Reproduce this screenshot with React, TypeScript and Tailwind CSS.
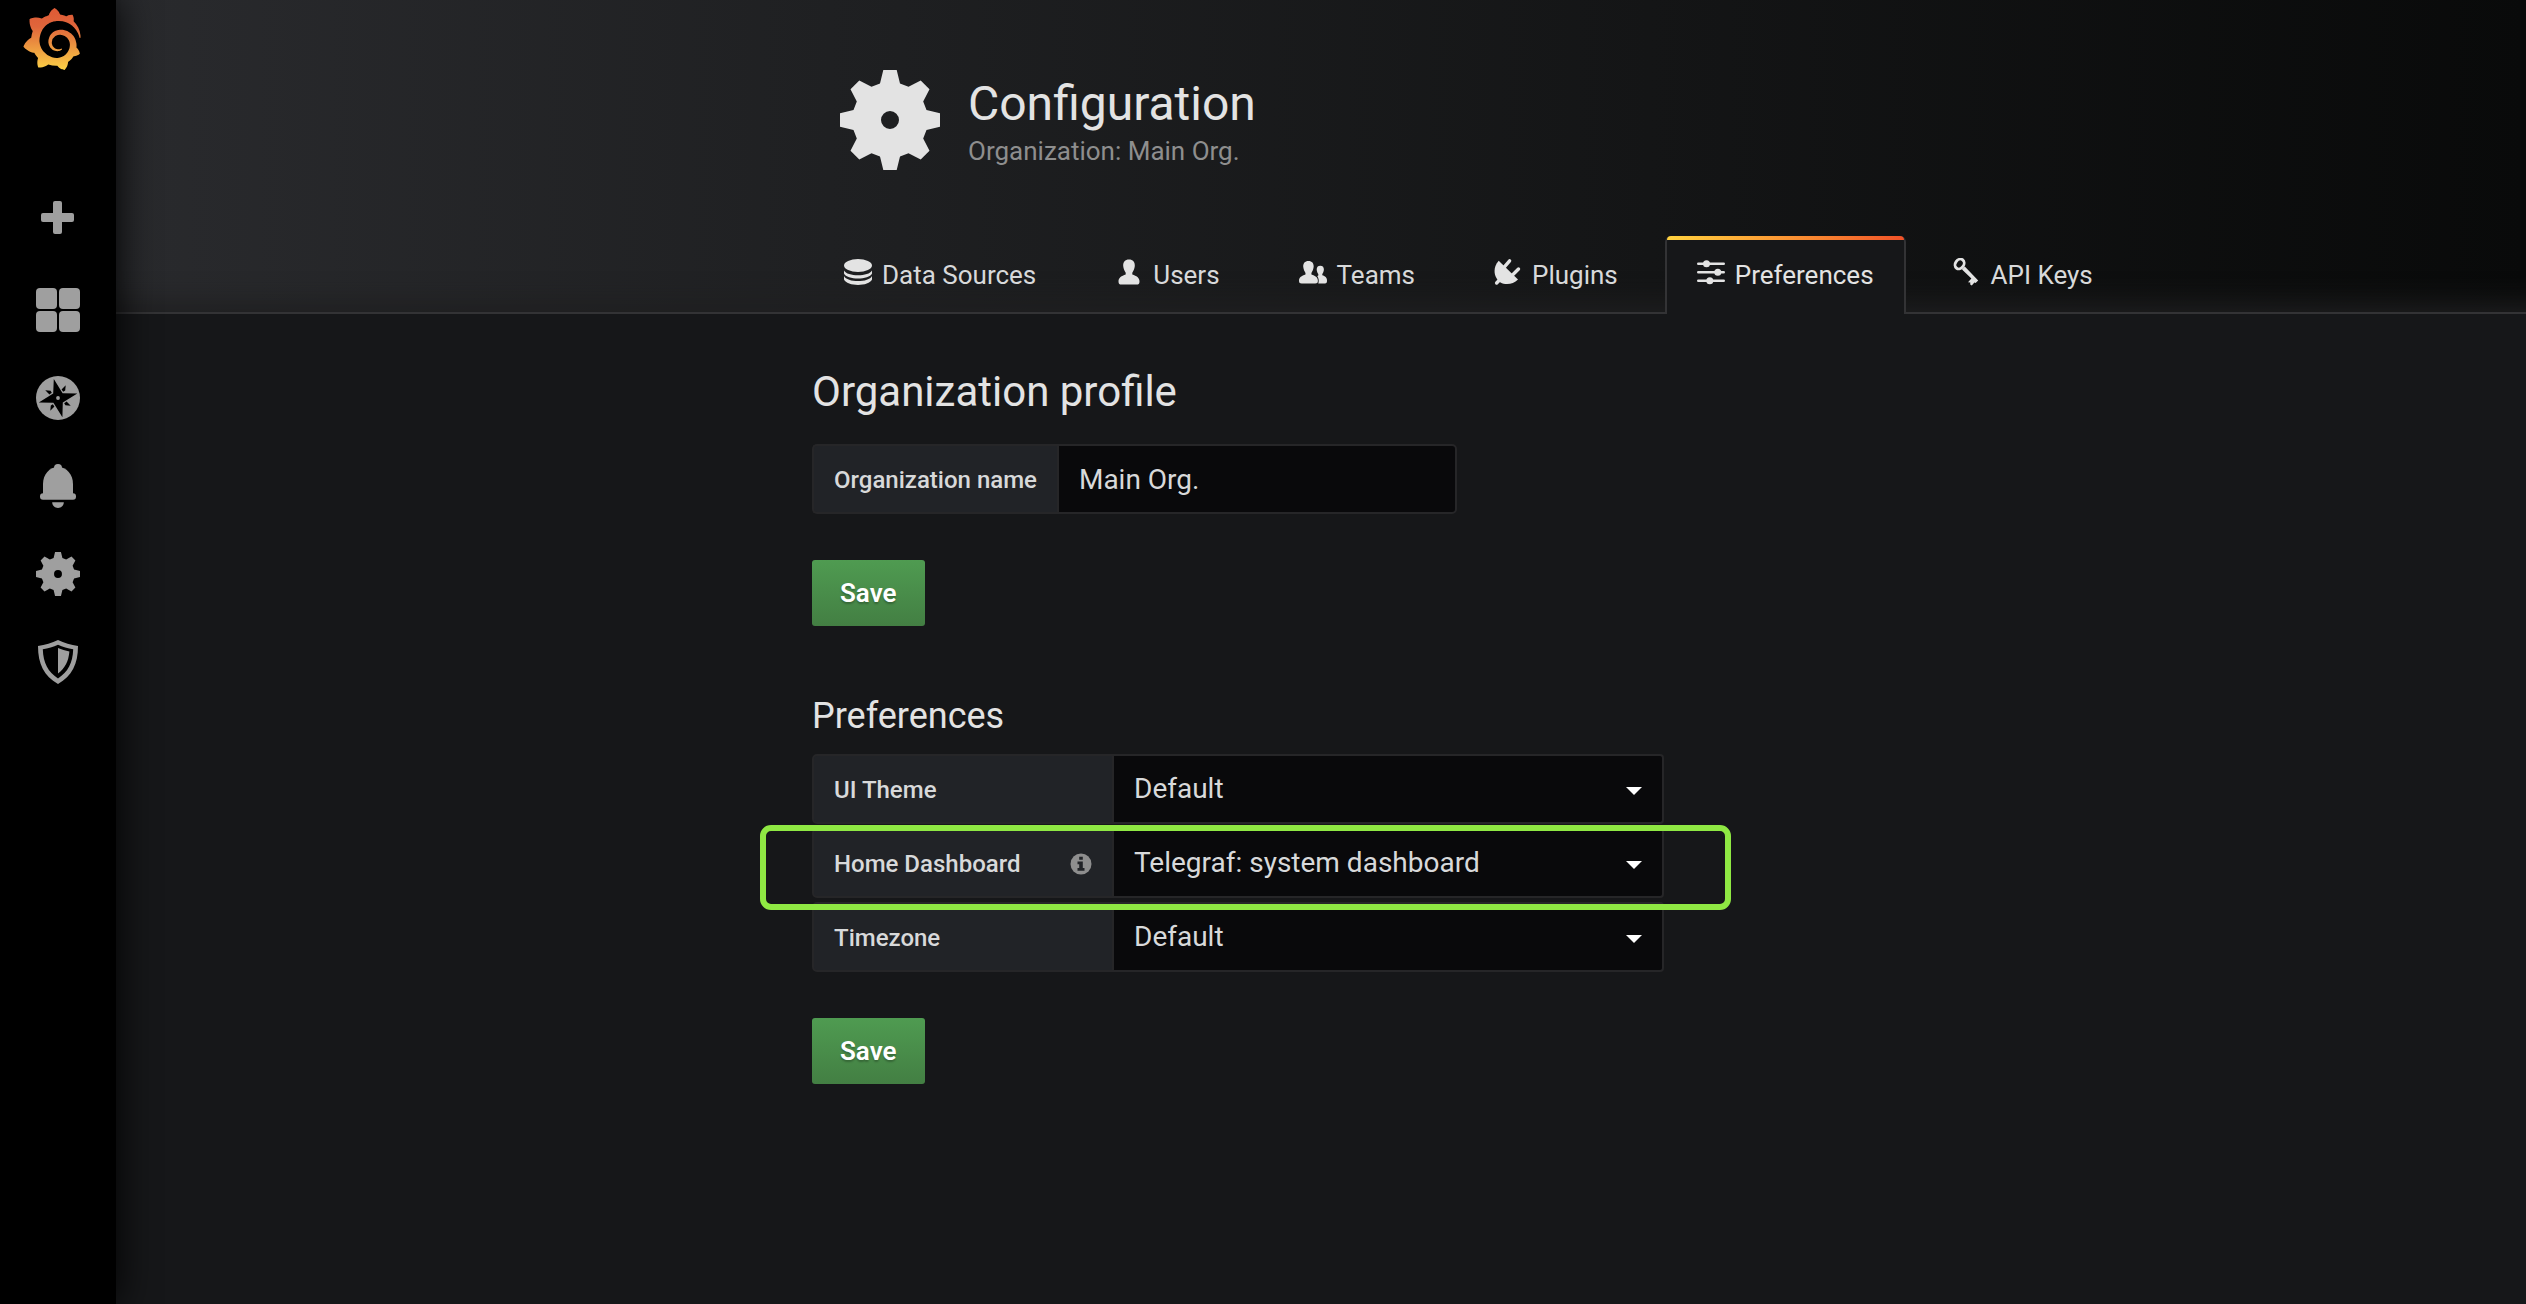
import { useId } from "react";
import type { ReactNode } from "react";
import { SiGrafana } from "react-icons/si";

function GearIcon({ className }: { className: string }) {
  return (
    <svg viewBox="0 0 100 100" className={className} fill="currentColor" aria-hidden="true">
      <path
        fillRule="evenodd"
        d="M43.3 0H56.7L60 13.5L68.5 16.8L80.7 10.5L89.5 19.3L83.2 31.5L86.5 40L100 43.3V56.7L86.5 60L83.2 68.5L89.5 80.7L80.7 89.5L68.5 83.2L60 86.5L56.7 100H43.3L40 86.5L31.5 83.2L19.3 89.5L10.5 80.7L16.8 68.5L13.5 60L0 56.7V43.3L13.5 40L16.8 31.5L10.5 19.3L19.3 10.5L31.5 16.8L40 13.5ZM50 41A9 9 0 1 0 50 59A9 9 0 1 0 50 41Z"
      />
    </svg>
  );
}

function SideIcon({ children }: { children: ReactNode }) {
  return (
    <svg viewBox="0 0 44 44" className="size-11" fill="currentColor" aria-hidden="true">
      {children}
    </svg>
  );
}

function TabIcon({ children }: { children: ReactNode }) {
  return (
    <svg viewBox="0 0 28 28" className="mb-1.5 size-7 shrink-0" fill="currentColor" aria-hidden="true">
      {children}
    </svg>
  );
}

const quarterTurns = [0, 90, 180, 270];

const sideLinks: { label: string; icon: ReactNode }[] = [
  {
    label: "Create",
    icon: (
      <SideIcon>
        <rect x="5" y="13" width="33" height="9" rx="2" />
        <rect x="17" y="1" width="9" height="33" rx="2" />
      </SideIcon>
    ),
  },
  {
    label: "Dashboards",
    icon: (
      <SideIcon>
        <rect x="0" y="0" width="21" height="21" rx="4" />
        <rect x="23" y="0" width="21" height="21" rx="4" />
        <rect x="0" y="23" width="21" height="21" rx="4" />
        <rect x="23" y="23" width="21" height="21" rx="4" />
      </SideIcon>
    ),
  },
  {
    label: "Explore",
    icon: (
      <SideIcon>
        <circle cx="22" cy="22" r="22" />
        <path
          fill="black"
          d="M17.8 3L26.6 17.2L41.3 17.4L26.8 26.6L26.4 41.2L17.4 26.8L2.8 26.4L17.2 17.4Z"
        />
        {quarterTurns.map((turn) => (
          <path
            key={turn}
            fill="black"
            transform={`rotate(${turn} 22 22)`}
            d="M29.7 9.3L25.6 13.4L27.2 15.8L29.2 14.6Z"
          />
        ))}
        <circle cx="22" cy="22" r="1.9" />
      </SideIcon>
    ),
  },
  {
    label: "Alerting",
    icon: (
      <SideIcon>
        <circle cx="22" cy="4" r="4" />
        <path d="M7 30V20C7 10.5 13.5 3 22 3S37 10.5 37 20V30Z" />
        <rect x="4" y="29.3" width="36" height="6.4" rx="3" />
        <path d="M16.2 38.3H27.8C27.8 41.5 25.3 44 22 44S16.2 41.5 16.2 38.3Z" />
      </SideIcon>
    ),
  },
  { label: "Configuration", icon: <GearIcon className="size-11" /> },
  {
    label: "Server Admin",
    icon: (
      <SideIcon>
        <path
          fillRule="evenodd"
          d="M22 0C16 3 9 5 2 6C2 24 8 36 22 44C36 36 42 24 42 6C35 5 28 3 22 0ZM22 4.7C17.5 7 12 8.5 6.8 9.3C7.3 23 12 32 22 38.4C32 32 36.7 23 37.2 9.3C32 8.5 26.5 7 22 4.7Z"
        />
        <path d="M22 8C25.5 9.6 29.5 10.8 33.4 11.4C32.5 21.5 29 28 22 33.4Z" />
      </SideIcon>
    ),
  },
];

const userPath =
  "M10.5 0C14.5 0 16.5 2.5 16.3 6.5C16 9.5 15 11.5 13.8 13.2V15C18 16.5 21 18 21 22C21 24.5 20 25 18 25H3C1 25 0 24.5 0 22C0 18 3 16.5 7.2 15V13.2C6 11.5 5 9.5 4.7 6.5C4.5 2.5 6.5 0 10.5 0Z";

const tabs: { label: string; active?: boolean; icon: ReactNode }[] = [
  {
    label: "Data Sources",
    icon: (
      <TabIcon>
        <ellipse cx="14" cy="7.5" rx="14" ry="6.5" />
        <path d="M0 12.5C3 18.8 25 18.8 28 12.5V15.5C25 22.2 3 22.2 0 15.5Z" />
        <path d="M0 18C3 24.8 25 24.8 28 18V21.5C25 28.7 3 28.7 0 21.5Z" />
      </TabIcon>
    ),
  },
  {
    label: "Users",
    icon: (
      <TabIcon>
        <path transform="translate(3.5 1.5)" d={userPath} />
      </TabIcon>
    ),
  },
  {
    label: "Teams",
    icon: (
      <TabIcon>
        <path transform="translate(0 3) scale(0.9)" d={userPath} />
        <path d="M21.3 7.7C23.8 7.7 25 9.3 24.9 11.8C24.7 13.7 24 15 23.3 16V17.3C26 18.2 28 19.3 28 22.5C28 24.8 27.5 25.5 26 25.5H19.2C20 24.5 20 20.5 18.6 18.8C18.2 18.3 18.6 17.9 19.3 17.5V16C18.5 15 17.9 13.7 17.7 11.8C17.6 9.3 18.8 7.7 21.3 7.7Z" />
      </TabIcon>
    ),
  },
  {
    label: "Plugins",
    icon: (
      <TabIcon>
        <path d="M4.7 2.7L24 21.5C19 27 11 27 6.5 24.5C0 20 -2 10 4.7 2.7Z" />
        <path
          d="M10 9.3L15.6 2.9M18.5 17L24.5 11M2.6 25L6 21.5"
          stroke="currentColor"
          strokeWidth="3.4"
          strokeLinecap="round"
        />
      </TabIcon>
    ),
  },
  {
    label: "Preferences",
    active: true,
    icon: (
      <TabIcon>
        <path
          d="M1.3 5.7H26.7M1.3 14.2H26.7M1.3 22.7H26.7"
          stroke="currentColor"
          strokeWidth="2.6"
          strokeLinecap="round"
        />
        <circle cx="9.5" cy="5.7" r="3.5" />
        <circle cx="20.8" cy="14.2" r="3.5" />
        <circle cx="12.8" cy="22.7" r="3.5" />
      </TabIcon>
    ),
  },
  {
    label: "API Keys",
    icon: (
      <TabIcon>
        <ellipse
          cx="6.6"
          cy="6"
          rx="4.2"
          ry="5.2"
          transform="rotate(35 6.6 6)"
          fill="none"
          stroke="currentColor"
          strokeWidth="2.8"
        />
        <path d="M9 11.4L11.8 8.6L25.2 22.6L22.6 25L21.4 24.6L18.8 27.6L17.2 26.6L17.3 24.6L15 24.2L18.4 20.4Z" />
      </TabIcon>
    ),
  },
];

const preferences = [
  { label: "UI Theme", value: "Default", info: false, highlight: false },
  { label: "Home Dashboard", value: "Telegraf: system dashboard", info: true, highlight: true },
  { label: "Timezone", value: "Default", info: false, highlight: false },
];

function InfoIcon() {
  return (
    <svg viewBox="0 0 22 22" className="size-[22px]" role="img" aria-label="Info">
      <circle cx="11" cy="11" r="10.5" fill="#8e8e8e" />
      <path
        fill="#212327"
        d="M9.2 3.8H12.8V6.8H9.2ZM7.5 8.5H12.8V15H14.5V17.8H7.5V15H9.2V11.2H7.5Z"
      />
    </svg>
  );
}

function SaveButton() {
  return (
    <button
      type="submit"
      className="mt-[46px] flex h-[66px] items-center justify-center rounded-[3px] bg-linear-to-b from-[#4f9b51] to-[#437f43] px-7 text-[26px] leading-8 font-semibold text-white [text-shadow:0_2px_2px_rgba(0,0,0,0.25)]"
    >
      Save
    </button>
  );
}

const labelStyle =
  "flex h-[70px] items-center justify-between rounded-l-[5px] border-2 border-[#262628] bg-[#212327] px-5 pt-0.5 text-[24px] font-medium";

function PreferenceRow({ label, value, info, highlight }: (typeof preferences)[number]) {
  const id = useId();
  return (
    <div className="relative flex">
      <label htmlFor={id} className={`${labelStyle} w-[302px]`}>
        {label}
        {info && <InfoIcon />}
      </label>
      <div className="relative flex-1">
        <select
          id={id}
          defaultValue={value}
          className="h-[70px] w-full appearance-none rounded-r-[4px] border-2 border-l-0 border-[#262628] bg-[#09090b] pr-14 pl-5 text-[28px] outline-none"
        >
          <option>{value}</option>
        </select>
        <svg
          viewBox="0 0 16 8"
          className="pointer-events-none absolute top-[33px] right-[22px] h-2 w-4"
          fill="white"
          aria-hidden="true"
        >
          <path d="M0 0H16L8 8Z" />
        </svg>
      </div>
      {highlight && (
        <div className="pointer-events-none absolute -top-[3px] -right-[67px] -bottom-3 -left-[52px] z-10 rounded-[11px] border-[6px] border-[#8fe843]" />
      )}
    </div>
  );
}

const pageGrid = "grid grid-cols-[minmax(48px,696px)_minmax(1300px,1fr)]";

export default function App() {
  return (
    <div className="flex min-h-screen bg-[#161719] font-['Roboto',sans-serif] text-[#d8d9da]">
      <aside className="z-20 flex w-[116px] shrink-0 flex-col bg-black text-[#9f9f9f] shadow-[0_0_40px_black]">
        <svg width="0" height="0" className="absolute" aria-hidden="true">
          <defs>
            <linearGradient id="logo-gradient" x1="0" y1="1" x2="0" y2="0">
              <stop offset="0" stopColor="#fbd046" />
              <stop offset="0.7" stopColor="#e0653b" />
              <stop offset="1" stopColor="#de5a35" />
            </linearGradient>
          </defs>
        </svg>
        <a href="#home" aria-label="Home" className="mt-2 ml-[21px] w-fit">
          <SiGrafana className="size-[62px]" fill="url(#logo-gradient)" />
        </a>
        <nav className="mt-[130px] flex flex-col items-center gap-11">
          {sideLinks.map(({ label, icon }) => (
            <a key={label} href="#menu" aria-label={label}>
              {icon}
            </a>
          ))}
        </nav>
      </aside>

      <div className="min-w-0 flex-1">
        <header
          className={`${pageGrid} border-b-2 border-[#333335] bg-linear-to-r from-[#292a2d] to-[#090a0a] pt-[70px] shadow-[inset_0_-36px_28px_-28px_#1f1f20]`}
        >
          <div className="col-start-2">
            <div className="flex gap-7 pl-7">
              <GearIcon className="size-[100px] text-[#e3e3e3]" />
              <div className="pt-2.5">
                <h1 className="text-[48px] leading-[48px] text-[#e3e3e3]">Configuration</h1>
                <p className="mt-2 text-[26px] leading-[30px] text-[#8e8e8e]">
                  Organization: Main Org.
                </p>
              </div>
            </div>
            <nav className="mt-[66px] -mb-0.5 flex gap-[15px]">
              {tabs.map(({ label, active, icon }) => (
                <a
                  key={label}
                  href="#tab"
                  aria-current={active ? "page" : undefined}
                  className={
                    active
                      ? "relative flex h-[78px] items-center gap-2.5 rounded-t-[6px] border-x-2 border-[#333335] bg-[#161719] px-[30px] text-[26px] text-[#e3e3e3] before:absolute before:inset-x-0 before:top-0 before:h-1 before:rounded-t-[4px] before:bg-linear-to-r before:from-[#ffd23f] before:to-[#f05128]"
                      : "flex h-[78px] items-center gap-2.5 px-8 text-[26px]"
                  }
                >
                  <span className="text-[#e3e3e3]">{icon}</span>
                  {label}
                </a>
              ))}
            </nav>
          </div>
        </header>

        <main className={`${pageGrid} pt-[54px] pb-16`}>
          <div className="col-start-2">
            <form onSubmit={(event) => event.preventDefault()}>
              <h2 className="text-[42px] leading-[48px] text-[#e3e3e3]">Organization profile</h2>
              <div className="mt-7 flex w-[645px]">
                <label htmlFor="org-name" className={`${labelStyle} border-r-0`}>
                  Organization name
                </label>
                <input
                  id="org-name"
                  type="text"
                  defaultValue="Main Org."
                  className="h-[70px] min-w-0 flex-1 rounded-r-[5px] border-2 border-[#262628] bg-[#09090b] px-5 text-[28px] outline-none"
                />
              </div>
              <SaveButton />
            </form>

            <form className="mt-[70px]" onSubmit={(event) => event.preventDefault()}>
              <h2 className="text-[36px] leading-10 text-[#e3e3e3]">Preferences</h2>
              <div className="mt-[18px] flex w-[852px] flex-col gap-1">
                {preferences.map((row) => (
                  <PreferenceRow key={row.label} {...row} />
                ))}
              </div>
              <SaveButton />
            </form>
          </div>
        </main>
      </div>
    </div>
  );
}
